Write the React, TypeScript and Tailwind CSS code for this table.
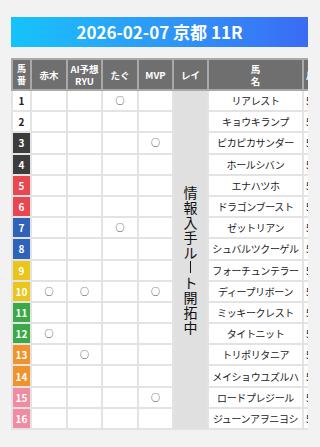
import React from 'react';

interface Horse {
  no: number;
  name: string;
  akagi?: boolean;
  ai?: boolean;
  tagu?: boolean;
  mvp?: boolean;
}

const horses: Horse[] = [
  { no: 1, name: 'リアレスト', tagu: true },
  { no: 2, name: 'キョウキランプ' },
  { no: 3, name: 'ピカピカサンダー', mvp: true },
  { no: 4, name: 'ホールシバン' },
  { no: 5, name: 'エナハツホ' },
  { no: 6, name: 'ドラゴンブースト' },
  { no: 7, name: 'ゼットリアン', tagu: true },
  { no: 8, name: 'シュバルツクーゲル' },
  { no: 9, name: 'フォーチュンテラー' },
  { no: 10, name: 'ディープリボーン', akagi: true, ai: true, mvp: true },
  { no: 11, name: 'ミッキークレスト' },
  { no: 12, name: 'タイトニット', akagi: true },
  { no: 13, name: 'トリポリタニア', ai: true },
  { no: 14, name: 'メイショウユズルハ' },
  { no: 15, name: 'ロードプレジール', mvp: true },
  { no: 16, name: 'ジューンアヲニヨシ' },
];

// waku colours, two horses per frame
const wakuClass: Record<number, string> = {
  1: 'bg-white text-[#222]',
  2: 'bg-white text-[#222]',
  3: 'bg-[#3c3c3c] text-white',
  4: 'bg-[#3c3c3c] text-white',
  5: 'bg-[#e8474f] text-white',
  6: 'bg-[#e8474f] text-white',
  7: 'bg-[#2f63b9] text-white',
  8: 'bg-[#2f63b9] text-white',
  9: 'bg-[#eac51c] text-white',
  10: 'bg-[#eac51c] text-white',
  11: 'bg-[#3ba947] text-white',
  12: 'bg-[#3ba947] text-white',
  13: 'bg-[#f1932b] text-white',
  14: 'bg-[#f1932b] text-white',
  15: 'bg-[#f08ba1] text-white',
  16: 'bg-[#f08ba1] text-white',
};

const reiNote = '情報入手ルート開拓中'.split('');

const Mark = ({ on }: { on?: boolean }) => (
  <td className="border-2 border-[#e3e3e3] bg-white text-center text-[9px] leading-none text-[#222]">
    {on ? '○' : ''}
  </td>
);

export default function App() {
  return (
    <div
      className="w-[320px] h-[447px] overflow-hidden bg-[#f2f2f2] pt-[17px] pl-[11px]"
      style={{ fontFamily: '"Noto Sans CJK JP", "Noto Sans", sans-serif' }}
    >
      {/* Title */}
      <div className="w-[297px] h-[30px] flex items-center justify-center bg-gradient-to-r from-[#14c3fb] to-[#3a6bf4] text-white text-[17px] font-bold">
        2026-02-07 京都 11R
      </div>

      {/* Table */}
      <div className="mt-[11px] w-[297px] overflow-hidden">
        <table className="border-collapse table-fixed w-[340px] text-[9.5px]">
          <colgroup>
            <col className="w-[19px]" />
            <col className="w-[36px]" />
            <col className="w-[35px]" />
            <col className="w-[36px]" />
            <col className="w-[35px]" />
            <col className="w-[35px]" />
            <col className="w-[95px]" />
            <col className="w-[49px]" />
          </colgroup>
          <thead>
            <tr className="h-[31px] bg-[#6f6f6f] text-white leading-[12px]">
              <th className="border-2 border-[#a9a9a9] text-[9px] font-bold">馬<br />番</th>
              <th className="border-2 border-[#a9a9a9] font-bold">赤木</th>
              <th className="border-2 border-[#a9a9a9] font-bold">AI予想<br />RYU</th>
              <th className="border-2 border-[#a9a9a9] font-bold">たぐ</th>
              <th className="border-2 border-[#a9a9a9] font-bold">MVP</th>
              <th className="border-2 border-[#a9a9a9] font-bold">レイ</th>
              <th className="border-2 border-[#a9a9a9] font-bold">馬<br />名</th>
              <th className="border-2 border-[#a9a9a9] font-bold text-left pl-[2px]">斤量</th>
            </tr>
          </thead>
          <tbody>
            {horses.map((h, i) => (
              <tr key={h.no} className="h-[21.2px]">
                <td className={`border-2 border-[#e3e3e3] text-center font-bold text-[10px] ${wakuClass[h.no]}`}>
                  {h.no}
                </td>
                <Mark on={h.akagi} />
                <Mark on={h.ai} />
                <Mark on={h.tagu} />
                <Mark on={h.mvp} />
                {i === 0 && (
                  <td
                    rowSpan={16}
                    className="border-2 border-[#e3e3e3] bg-[#e0e0e0] align-middle"
                  >
                    <div className="flex flex-col text-[14px] leading-[15px] text-[#111]">
                      {reiNote.map((c, k) =>
                        c === 'ー' ? (
                          <span key={k} className="h-[15px] flex items-center justify-center">
                            <span className="block w-[1.5px] h-[12px] bg-[#111]" />
                          </span>
                        ) : (
                          <span key={k} className="block h-[15px] w-full text-center">{c}</span>
                        ),
                      )}
                    </div>
                  </td>
                )}
                <td className="border-2 border-[#e3e3e3] bg-white text-center text-[10px] tracking-[-0.4px] text-[#222] whitespace-nowrap">
                  {h.name}
                </td>
                <td className="border-2 border-[#e3e3e3] bg-white pl-[2px] text-[10px] text-[#222]">57.0</td>
              </tr>
            ))}
          </tbody>
        </table>
      </div>
    </div>
  );
}
